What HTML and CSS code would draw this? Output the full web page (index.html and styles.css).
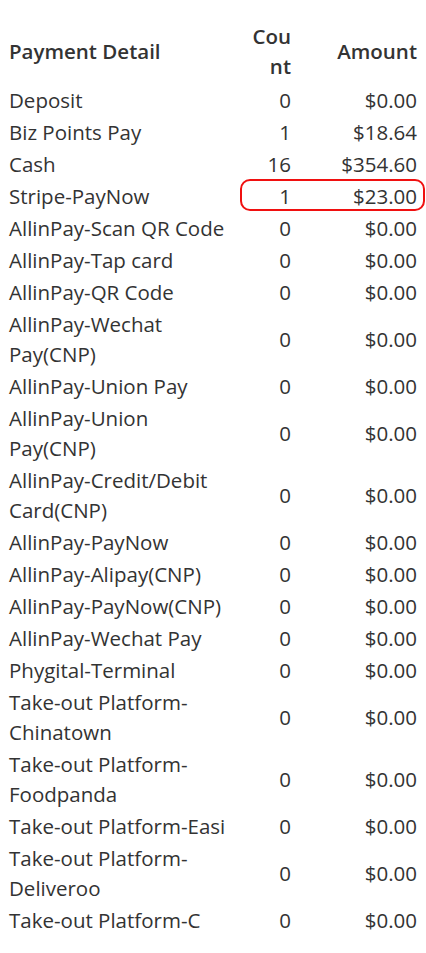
FILE: index.html
```html
<!DOCTYPE html>
<html>
<head>
<meta charset="utf-8">
<link rel="stylesheet" href="styles.css">
</head>
<body>
<table class="pay">
  <colgroup><col class="c-name"><col class="c-count"><col class="c-amt"></colgroup>
  <thead>
    <tr><th class="name">Payment Detail</th><th class="num">Cou<wbr>nt</th><th class="num">Amount</th></tr>
  </thead>
  <tbody>
    <tr><td>Deposit</td><td class="num">0</td><td class="num">$0.00</td></tr>
    <tr><td>Biz Points Pay</td><td class="num">1</td><td class="num">$18.64</td></tr>
    <tr><td>Cash</td><td class="num">16</td><td class="num">$354.60</td></tr>
    <tr><td>Stripe-PayNow</td><td class="num mark"><span class="ring"></span>1</td><td class="num">$23.00</td></tr>
    <tr><td>AllinPay-Scan QR Code</td><td class="num">0</td><td class="num">$0.00</td></tr>
    <tr><td>AllinPay-Tap card</td><td class="num">0</td><td class="num">$0.00</td></tr>
    <tr><td>AllinPay-QR Code</td><td class="num">0</td><td class="num">$0.00</td></tr>
    <tr><td>AllinPay-Wechat Pay(CNP)</td><td class="num">0</td><td class="num">$0.00</td></tr>
    <tr><td>AllinPay-Union Pay</td><td class="num">0</td><td class="num">$0.00</td></tr>
    <tr><td>AllinPay-Union Pay(CNP)</td><td class="num">0</td><td class="num">$0.00</td></tr>
    <tr><td>AllinPay-Credit/Debit Card(CNP)</td><td class="num">0</td><td class="num">$0.00</td></tr>
    <tr><td>AllinPay-PayNow</td><td class="num">0</td><td class="num">$0.00</td></tr>
    <tr><td>AllinPay-Alipay(CNP)</td><td class="num">0</td><td class="num">$0.00</td></tr>
    <tr><td>AllinPay-PayNow(CNP)</td><td class="num">0</td><td class="num">$0.00</td></tr>
    <tr><td>AllinPay-Wechat Pay</td><td class="num">0</td><td class="num">$0.00</td></tr>
    <tr><td>Phygital-Terminal</td><td class="num">0</td><td class="num">$0.00</td></tr>
    <tr><td>Take-out Platform-Chinatown</td><td class="num">0</td><td class="num">$0.00</td></tr>
    <tr><td>Take-out Platform-Foodpanda</td><td class="num">0</td><td class="num">$0.00</td></tr>
    <tr><td>Take-out Platform-Easi</td><td class="num">0</td><td class="num">$0.00</td></tr>
    <tr><td>Take-out Platform-Deliveroo</td><td class="num">0</td><td class="num">$0.00</td></tr>
    <tr><td>Take-out Platform-C</td><td class="num">0</td><td class="num">$0.00</td></tr>
  </tbody>
</table>
</body>
</html>
```
FILE: styles.css
```css
html, body { background: #fff; }
body {
  margin: 0;
  padding: 20px 8px 0 8px;
  font-family: "Open Sans", "Noto Sans", sans-serif;
  font-size: 20.5px;
  color: #333;
}
.pay {
  width: 410px;
  table-layout: fixed;
  border-collapse: collapse;
}
.c-name { width: 232px; }
.c-count { width: 52px; }
.c-amt { width: 126px; }
.pay th, .pay td {
  padding: 1px 1px;
  line-height: 30px;
  vertical-align: middle;
  font-weight: normal;
  text-align: left;
}
.pay th {
  font-weight: 600;
  padding-bottom: 3px;
}
.pay .num { text-align: right; }
.mark { position: relative; }
.ring {
  position: absolute;
  left: 0;
  top: -1px;
  width: 185px;
  height: 32px;
  box-sizing: border-box;
  border: 2px solid #f01010;
  border-radius: 10px;
}
```
